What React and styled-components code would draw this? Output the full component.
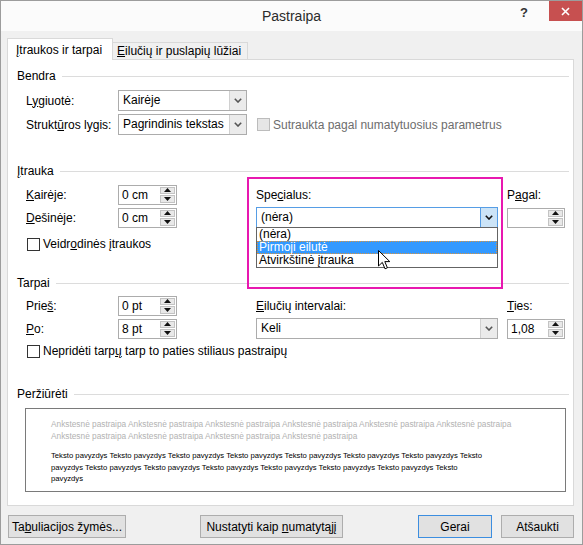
import React from 'react';
import styled, { createGlobalStyle } from 'styled-components';

const GlobalStyle = createGlobalStyle`
  body {
    margin: 0;
    background: #ffffff;
    font-family: "Liberation Sans", Arial, sans-serif;
    font-size: 12px;
    color: #000;
  }
  u { text-underline-offset: 1px; }
`;

const Window = styled.div`
  width: 583px;
  height: 545px;
  box-sizing: border-box;
  border: 1px solid #9c9c9c;
  background: #f0f0f0;
  display: flex;
  flex-direction: column;
`;

const TitleBar = styled.div`
  height: 30px;
  background: #fbfbfb;
  display: grid;
  grid-template-columns: 1fr auto 1fr;
  align-items: start;
`;

const Title = styled.div`
  grid-column: 2;
  font-size: 14px;
  line-height: 31px;
  color: #2b2b2b;
`;

const Controls = styled.div`
  justify-self: end;
  display: flex;
  align-items: flex-start;
`;

const Help = styled.div`
  font-weight: bold;
  font-size: 13px;
  line-height: 14px;
  margin-top: 5px;
  margin-right: 21px;
  color: #333;
`;

const Close = styled.div`
  width: 33px;
  height: 20px;
  background: #c75050;
  display: flex;
  align-items: center;
  justify-content: center;
`;

const Body = styled.div`
  flex: 1;
  padding: 7px 8px 0 6px;
  display: flex;
  flex-direction: column;
`;

const TabRow = styled.div`
  display: flex;
  align-items: flex-end;
  height: 21px;
`;

const Tab = styled.div`
  position: relative;
  box-sizing: border-box;
  border: 1px solid #d9d9d9;
  border-bottom: none;
  white-space: nowrap;
  ${(p) =>
    p.$active
      ? `
    height: 22px;
    margin-bottom: -1px;
    z-index: 1;
    background: #ffffff;
    padding: 0 10px 0 8px;
    line-height: 22px;
  `
      : `
    height: 17px;
    border-left: none;
    background: #f0f0f0;
    padding: 0 6px 0 4px;
    line-height: 17px;
  `}
`;

const Panel = styled.div`
  box-sizing: border-box;
  height: 447px;
  border: 1px solid #d9d9d9;
  background: #ffffff;
  padding: 9px 4px 0 9px;
`;

const Section = styled.div`
  position: relative;
  margin-top: ${(p) => p.$gap || 0}px;
`;

const HeaderRow = styled.div`
  display: flex;
  align-items: center;
  height: 14px;
  line-height: 14px;
`;

const HeaderLine = styled.div`
  flex: 1;
  height: 1px;
  background: #dcdcdc;
  margin-left: 6px;
`;

const FieldGrid = styled.div`
  display: grid;
  grid-template-columns: ${(p) => p.$cols};
  grid-template-rows: 21px 21px;
  row-gap: ${(p) => p.$rowGap}px;
  align-items: center;
  justify-items: start;
  margin: ${(p) => p.$top}px 0 0 9px;
`;

const Label = styled.div`
  white-space: nowrap;
`;

const SelectWrap = styled.div`
  position: relative;
  width: ${(p) => p.$w}px;
`;

const SelectBox = styled.div`
  box-sizing: border-box;
  width: 100%;
  height: 21px;
  border: 1px solid ${(p) => (p.$focused ? '#569de5' : '#acacac')};
  background: #ffffff;
  display: flex;
`;

const SelectValue = styled.div`
  flex: 1;
  padding-left: 4px;
  line-height: 19px;
  white-space: nowrap;
  overflow: hidden;
`;

const ArrowBox = styled.div`
  width: 16px;
  border-left: 1px solid ${(p) => (p.$focused ? '#569de5' : '#d0d0d0')};
  background: ${(p) => (p.$focused ? '#cce4f7' : '#ebebeb')};
  display: flex;
  align-items: center;
  justify-content: center;
`;

const DropList = styled.div`
  position: absolute;
  left: 0;
  top: calc(100% - 1px);
  width: 100%;
  box-sizing: border-box;
  border: 1px solid #646464;
  background: #ffffff;
  z-index: 3;
`;

const DropItem = styled.div`
  height: 13px;
  line-height: 13px;
  padding-left: 2px;
  white-space: nowrap;
  background: ${(p) => (p.$selected ? '#3399ff' : 'transparent')};
  color: ${(p) => (p.$selected ? '#ffffff' : '#000000')};
  outline: ${(p) => (p.$selected ? '1px dotted #d9943f' : 'none')};
  outline-offset: -1px;
`;

const Pointer = styled.svg`
  position: absolute;
  left: 121px;
  top: 22px;
  z-index: 4;
`;

const SpinBox = styled.div`
  box-sizing: border-box;
  width: ${(p) => p.$w}px;
  height: 20px;
  border: 1px solid #acacac;
  background: #ffffff;
  display: flex;
`;

const SpinValue = styled.div`
  flex: 1;
  padding-left: 3px;
  line-height: 18px;
`;

const SpinButtons = styled.div`
  width: 15px;
  display: flex;
  flex-direction: column;
  gap: 1px;
  padding: 1px 1px 1px 0;
`;

const SpinHalf = styled.div`
  flex: 1;
  box-sizing: border-box;
  border: 1px solid #c3c3c3;
  background: #e8e8e8;
  display: flex;
  align-items: center;
  justify-content: center;
`;

const CheckRow = styled.div`
  display: flex;
  align-items: center;
  gap: 3px;
  margin: ${(p) => p.$top || 0}px 0 0 ${(p) => p.$left || 0}px;
  color: ${(p) => (p.$disabled ? '#6d6d6d' : '#000')};
  white-space: nowrap;
`;

const Box = styled.span`
  width: 13px;
  height: 13px;
  box-sizing: border-box;
  border: 1px solid ${(p) => (p.$disabled ? '#bcbcbc' : '#333333')};
  background: ${(p) => (p.$disabled ? '#e6e6e6' : '#ffffff')};
`;

const Highlight = styled.div`
  position: absolute;
  left: 230px;
  top: 13px;
  width: 256px;
  height: 112px;
  box-sizing: border-box;
  border: 2px solid #e818b0;
  pointer-events: none;
  z-index: 5;
`;

const Preview = styled.div`
  box-sizing: border-box;
  width: 541px;
  height: 84px;
  margin: 7px 0 0 8px;
  border: 1px solid #7a7a7a;
  padding: 9px 0 0 25px;
`;

const PrevLine = styled.div`
  white-space: nowrap;
  font-size: 8.3px;
  line-height: 12px;
  color: #b2b2b2;
`;

const SampleBlock = styled.div`
  margin-top: 8px;
`;

const SampleLine = styled.div`
  white-space: nowrap;
  font-size: 7.7px;
  line-height: 11.5px;
  color: #000;
`;

const Footer = styled.div`
  display: flex;
  align-items: center;
  margin-top: 9px;
  padding-left: 1px;
`;

const Button = styled.button`
  box-sizing: border-box;
  width: ${(p) => p.$w}px;
  height: 23px;
  margin-left: ${(p) => (p.$auto ? 'auto' : `${p.$gap || 0}px`)};
  border: 1px solid ${(p) => (p.$primary ? '#3c8ee0' : '#adadad')};
  background: #e1e1e1;
  font-family: "Liberation Sans", Arial, sans-serif;
  font-size: 12px;
  color: #000;
  padding: 0;
`;

const Chevron = ({ dark }) => (
  <svg width="8" height="5" viewBox="0 0 8 5">
    <polyline points="0.8,0.8 4,4 7.2,0.8" fill="none" stroke={dark ? '#111' : '#555'} strokeWidth="1.6" />
  </svg>
);

const Select = ({ w, value, focused, children }) => (
  <SelectWrap $w={w}>
    <SelectBox $focused={focused}>
      <SelectValue>{value}</SelectValue>
      <ArrowBox $focused={focused}>
        <Chevron dark={focused} />
      </ArrowBox>
    </SelectBox>
    {children}
  </SelectWrap>
);

const Spin = ({ w = 59, value }) => (
  <SpinBox $w={w}>
    <SpinValue>{value}</SpinValue>
    <SpinButtons>
      <SpinHalf>
        <svg width="7" height="4" viewBox="0 0 7 4">
          <polygon points="0,4 3.5,0 7,4" fill="#111" />
        </svg>
      </SpinHalf>
      <SpinHalf>
        <svg width="7" height="4" viewBox="0 0 7 4">
          <polygon points="0,0 7,0 3.5,4" fill="#111" />
        </svg>
      </SpinHalf>
    </SpinButtons>
  </SpinBox>
);

const Check = ({ label, disabled, top, left }) => (
  <CheckRow $disabled={disabled} $top={top} $left={left}>
    <Box $disabled={disabled} />
    <span>{label}</span>
  </CheckRow>
);

const SectionHeader = ({ children }) => (
  <HeaderRow>
    <span>{children}</span>
    <HeaderLine />
  </HeaderRow>
);

const prevLine = (n) => Array(n).fill('Ankstesnė pastraipa').join(' ');
const sample = (n) => Array(n).fill('Teksto pavyzdys').join(' ');

export default function App() {
  return (
    <>
      <GlobalStyle />
      <Window>
        <TitleBar>
          <Title>Pastraipa</Title>
          <Controls>
            <Help>?</Help>
            <Close>
              <svg width="9" height="9" viewBox="0 0 9 9">
                <path d="M1 1 L8 8 M8 1 L1 8" stroke="#fff" strokeWidth="1.6" />
              </svg>
            </Close>
          </Controls>
        </TitleBar>
        <Body>
          <TabRow>
            <Tab $active>
              <u>Į</u>traukos ir tarpai
            </Tab>
            <Tab>
              <u>E</u>ilučių ir puslapių lūžiai
            </Tab>
          </TabRow>
          <Panel>
            <Section>
              <SectionHeader>Bendra</SectionHeader>
              <FieldGrid $cols="92px 129px auto" $rowGap={3} $top={7}>
                <Label>
                  L<u>y</u>giuotė:
                </Label>
                <Select w={129} value="Kairėje" />
                <span />
                <Label>
                  Strukt<u>ū</u>ros lygis:
                </Label>
                <Select w={129} value="Pagrindinis tekstas" />
                <Check label="Sutraukta pagal numatytuosius parametrus" disabled left={10} />
              </FieldGrid>
            </Section>

            <Section $gap={29}>
              <SectionHeader>
                <u>Į</u>trauka
              </SectionHeader>
              <FieldGrid $cols="92px 138px 251px 58px" $rowGap={2} $top={6}>
                <Label>
                  <u>K</u>airėje:
                </Label>
                <Spin value="0 cm" />
                <Label>
                  Spe<u>c</u>ialus:
                </Label>
                <Label>
                  P<u>a</u>gal:
                </Label>
                <Label>
                  <u>D</u>ešinėje:
                </Label>
                <Spin value="0 cm" />
                <Select w={242} value="(nėra)" focused>
                  <DropList>
                    <DropItem>(nėra)</DropItem>
                    <DropItem $selected>Pirmoji eilutė</DropItem>
                    <DropItem>Atvirkštinė įtrauka</DropItem>
                    <Pointer width="13" height="20" viewBox="0 0 13 20">
                      <path
                        d="M0.5 0.5 L0.5 16 L4.3 12.4 L7 18.8 L9.4 17.8 L6.8 11.6 L11.8 11.6 Z"
                        fill="#fff"
                        stroke="#000"
                        strokeWidth="1"
                        strokeLinejoin="round"
                      />
                    </Pointer>
                  </DropList>
                </Select>
                <Spin w={58} value="" />
              </FieldGrid>
              <Check
                label={
                  <>
                    Veidr<u>o</u>dinės įtraukos
                  </>
                }
                top={9}
                left={10}
              />
              <Highlight />
            </Section>

            <Section $gap={25}>
              <SectionHeader>Tarpai</SectionHeader>
              <FieldGrid $cols="92px 138px 251px 58px" $rowGap={2} $top={5}>
                <Label>
                  Prie<u>š</u>:
                </Label>
                <Spin value="0 pt" />
                <Label>
                  <u>E</u>ilučių intervalai:
                </Label>
                <Label>
                  <u>T</u>ies:
                </Label>
                <Label>
                  <u>P</u>o:
                </Label>
                <Spin value="8 pt" />
                <Select w={242} value="Keli" />
                <Spin w={58} value="1,08" />
              </FieldGrid>
              <Check
                label={
                  <>
                    Nepridėti tarp<u>ų</u> tarp to paties stiliaus pastraipų
                  </>
                }
                top={5}
                left={10}
              />
            </Section>

            <Section $gap={29}>
              <SectionHeader>Peržiūrėti</SectionHeader>
              <Preview>
                <PrevLine>{prevLine(6)}</PrevLine>
                <PrevLine>{prevLine(4)}</PrevLine>
                <SampleBlock>
                  <SampleLine>{sample(7)} Teksto</SampleLine>
                  <SampleLine>pavyzdys {sample(6)} Teksto</SampleLine>
                  <SampleLine>pavyzdys</SampleLine>
                </SampleBlock>
              </Preview>
            </Section>
          </Panel>
          <Footer>
            <Button $w={118}>
              Ta<u>b</u>uliacijos žymės...
            </Button>
            <Button $w={143} $gap={74}>
              Nustatyti kaip <u>n</u>umatytąjį
            </Button>
            <Button $w={74} $auto $primary>
              Gerai
            </Button>
            <Button $w={73} $gap={9}>
              Atšaukti
            </Button>
          </Footer>
        </Body>
      </Window>
    </>
  );
}
